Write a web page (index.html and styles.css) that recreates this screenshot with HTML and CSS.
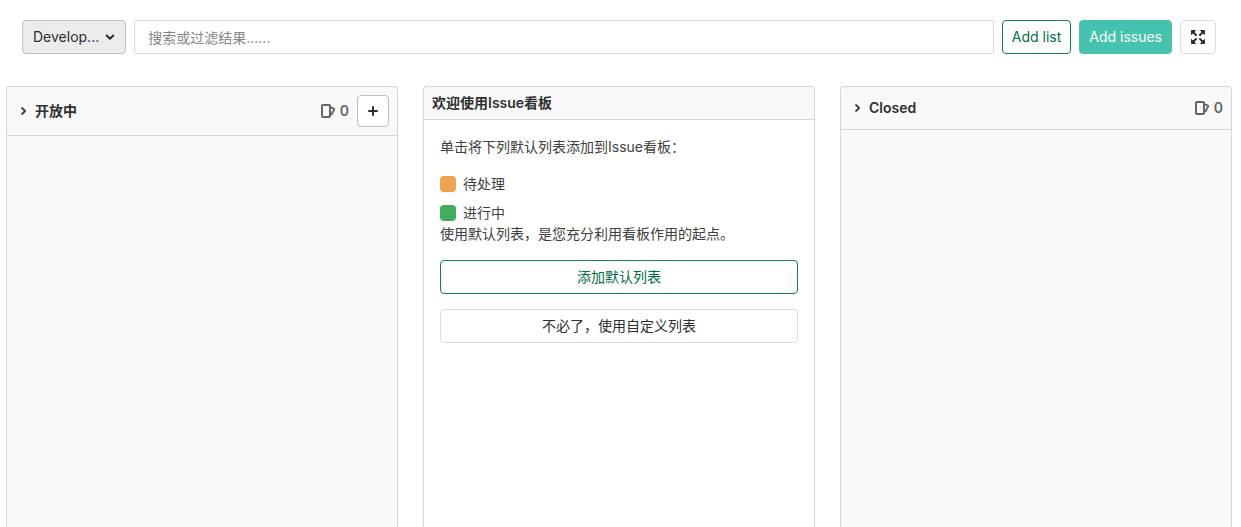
FILE: index.html
```html
<!DOCTYPE html>
<html lang="zh-CN">
<head>
<meta charset="utf-8">
<meta name="viewport" content="width=device-width, initial-scale=1">
<title>Issue看板</title>
<link rel="stylesheet" href="styles.css">
</head>
<body>
<svg class="sprite" aria-hidden="true">
  <symbol id="chevron" viewBox="0 0 10 10"><path d="M3 2 6.200 5 3 8" fill="none" stroke="currentColor" stroke-width="1.8" stroke-linecap="round" stroke-linejoin="round"/></symbol>
  <symbol id="issues" viewBox="0 0 16 16"><path d="M3 2h6a1 1 0 0 1 1 1v10a1 1 0 0 1-1 1H3a1 1 0 0 1-1-1V3a1 1 0 0 1 1-1zM10.500 4.200 13.800 5.700a.7.7 0 0 1 .3.900L11.200 12" fill="none" stroke="currentColor" stroke-width="2" stroke-linejoin="round"/></symbol>
</svg>
<header class="filters">
  <button class="btn btn-board" type="button">
    <span>Develop...</span>
    <svg class="caret" viewBox="0 0 10 10" aria-hidden="true"><path d="M1.700 3.500 5 6.700 8.300 3.500" fill="none" stroke="currentColor" stroke-width="2" stroke-linecap="round" stroke-linejoin="round"/></svg>
  </button>
  <input class="search" type="text" placeholder="搜索或过滤结果......" aria-label="搜索或过滤结果">
  <button class="btn btn-outline" type="button">Add list</button>
  <button class="btn btn-teal" type="button">Add issues</button>
  <button class="btn" type="button" aria-label="全屏">
    <svg class="icon" viewBox="0 0 16 16" aria-hidden="true"><g fill="currentColor" stroke="currentColor" stroke-linejoin="round"><path d="M1.500 1.500h4l-4 4zM14.500 1.500h-4l4 4zM1.500 14.500h4l-4-4zM14.500 14.500h-4l4-4z" stroke-width="1"/><path d="M3 3l3 3M13 3l-3 3M3 13l3-3M13 13l-3-3" stroke-width="2" stroke-linecap="round"/></g></svg>
  </button>
</header>
<main class="boards">
  <section class="board">
    <header class="board-header">
      <button class="toggle" type="button" aria-label="折叠"><svg class="chevron"><use href="#chevron"/></svg></button>
      <h2 class="title">开放中</h2>
      <span class="count"><svg class="icon"><use href="#issues"/></svg>0</span>
      <button class="btn btn-add" type="button" aria-label="新建议题"><svg class="plus" viewBox="0 0 12 12" aria-hidden="true"><path d="M6 2v8M2 6h8" stroke="currentColor" stroke-width="2" stroke-linecap="round"/></svg></button>
    </header>
  </section>
  <section class="board board-blank">
    <header class="board-header blank-header"><h2 class="title">欢迎使用Issue看板</h2></header>
    <div class="blank-body">
      <p class="text">单击将下列默认列表添加到Issue看板：</p>
      <ul class="labels">
        <li class="label"><span class="swatch swatch-todo"></span>待处理</li>
        <li class="label"><span class="swatch swatch-doing"></span>进行中</li>
      </ul>
      <p class="text">使用默认列表，是您充分利用看板作用的起点。</p>
      <div class="actions">
        <button class="btn btn-outline" type="button">添加默认列表</button>
        <button class="btn" type="button">不必了，使用自定义列表</button>
      </div>
    </div>
  </section>
  <section class="board">
    <header class="board-header">
      <button class="toggle" type="button" aria-label="折叠"><svg class="chevron"><use href="#chevron"/></svg></button>
      <h2 class="title">Closed</h2>
      <span class="count count-last"><svg class="icon"><use href="#issues"/></svg>0</span>
    </header>
  </section>
</main>
</body>
</html>
```
FILE: styles.css
```css
* {
  box-sizing: border-box;
}

body {
  display: flex;
  flex-direction: column;
  min-height: 100vh;
  margin: 0;
  background: #fff;
  color: #303030;
  font: 14px/20px Inter, "Noto Sans CJK SC", sans-serif;
}

.sprite {
  position: absolute;
  width: 0;
  height: 0;
}

.filters {
  display: flex;
  gap: 8px;
  padding: 20px 25px 32px 22px;
}

.btn {
  display: flex;
  align-items: center;
  justify-content: center;
  height: 34px;
  padding: 0 9px;
  border: 1px solid #dbdbdb;
  border-radius: 4px;
  background: #fff;
  color: #2e2e2e;
  font: inherit;
  white-space: nowrap;
}

.btn-board {
  gap: 6px;
  padding: 0 10px;
  border-color: #bfbfbf;
  background: #ececec;
}

.btn-outline {
  border-color: #108548;
  color: #006f3f;
}

.btn-teal {
  border-color: #46c3ae;
  background: #46c3ae;
  color: #fff;
}

.caret,
.chevron {
  display: block;
  width: 10px;
  height: 10px;
}

.icon {
  display: block;
  width: 16px;
  height: 16px;
}

.search {
  flex: 1;
  min-width: 0;
  height: 34px;
  padding: 0 13px;
  border: 1px solid #dbdbdb;
  border-radius: 2px;
  background: #fff;
  color: #303030;
  font: inherit;
}

.search::placeholder {
  color: #868686;
  opacity: 1;
}

.boards {
  display: grid;
  flex: 1;
  grid-template-columns: repeat(3, minmax(0, 1fr));
  gap: 25px;
  padding: 0 9px 0 6px;
}

.board {
  border: 1px solid #d6d6d6;
  border-bottom: 0;
  border-radius: 4px 4px 0 0;
  background: #f9f9f9;
}

.board-blank {
  background: #fff;
}

.board-header {
  display: flex;
  align-items: center;
  min-height: 43px;
  padding: 8px;
  border-bottom: 1px solid #d6d6d6;
  border-radius: 4px 4px 0 0;
  background: #f9f9f9;
}

.blank-header {
  min-height: 33px;
  padding: 6px 8px;
}

.toggle {
  margin: 0 6px 0 4px;
  padding: 0;
  border: 0;
  background: none;
  color: #404040;
}

.title {
  flex: 1;
  margin: 0;
  font-size: 14px;
  font-weight: 600;
}

.count {
  display: flex;
  align-items: center;
  gap: 4px;
  margin-right: 8px;
  color: #666;
  font-weight: 600;
}

.count-last {
  margin-right: 0;
}

.btn-add {
  width: 32px;
  height: 32px;
  padding: 0;
  border-color: #bfbfbf;
}

.plus {
  width: 12px;
  height: 12px;
}

.blank-body {
  padding: 16px;
  color: #404040;
}

.text {
  margin: 0;
  line-height: 22px;
}

.labels {
  display: grid;
  gap: 9px;
  margin: 16px 0 0;
  padding: 0;
  list-style: none;
}

.label {
  display: flex;
  align-items: center;
  gap: 7px;
}

.swatch {
  width: 16px;
  height: 16px;
  border-radius: 4px;
}

.swatch-todo {
  background: #f0a34f;
}

.swatch-doing {
  background: #44ad5b;
}

.actions {
  display: grid;
  gap: 15px;
  margin-top: 15px;
}
```
